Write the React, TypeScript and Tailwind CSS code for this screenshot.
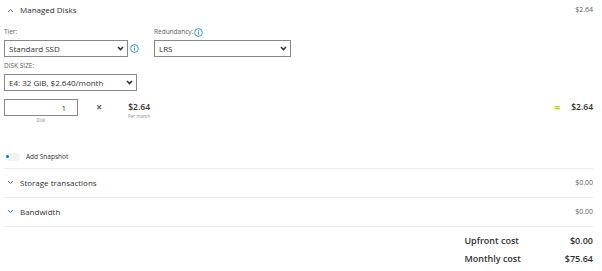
const Chevron = ({ up, className }: { up?: boolean; className?: string }) => (
  <svg width="7" height="5" viewBox="0 0 7 5" className={className}>
    <path
      d={up ? "M1 4 L3.5 1.5 L6 4" : "M1 1 L3.5 3.5 L6 1"}
      fill="none"
      stroke="currentColor"
      strokeWidth="0.9"
    />
  </svg>
);

const SelectCaret = () => (
  <svg width="7" height="5" viewBox="0 0 7 5" className="text-[#333]">
    <path d="M1 1 L3.5 3.5 L6 1" fill="none" stroke="currentColor" strokeWidth="1.6" />
  </svg>
);

const Info = () => (
  <svg width="9" height="9" viewBox="0 0 9 9" className="text-[#0078d4]">
    <circle cx="4.5" cy="4.5" r="3.9" fill="none" stroke="currentColor" strokeWidth="0.8" />
    <rect x="4.1" y="2.1" width="0.8" height="0.8" fill="currentColor" />
    <rect x="4.1" y="3.6" width="0.8" height="3" fill="currentColor" />
  </svg>
);

interface FakeSelectProps {
  value: string;
  width: string;
}

const FakeSelect = ({ value, width }: FakeSelectProps) => (
  <div
    className={`${width} h-[17px] border border-[#8a8886] bg-white flex items-center justify-between pl-[4px] pr-[3px]`}
  >
    <span className="text-[8px] text-[#323130]">{value}</span>
    <SelectCaret />
  </div>
);

const SectionRow = ({
  label,
  amount,
  blue,
}: {
  label: string;
  amount: string;
  blue?: boolean;
}) => (
  <div className="h-[29px] flex items-center justify-between border-b border-[#edebe9] pl-[3px]">
    <div className="flex items-center gap-[6px]">
      <Chevron className={blue ? "text-[#0078d4]" : "text-[#605e5c]"} />
      <span className="text-[8px] text-[#323130]">{label}</span>
    </div>
    <span className="text-[7px] text-[#605e5c]">{amount}</span>
  </div>
);

export default function App() {
  return (
    <div
      className="w-[602px] h-[271px] bg-white pl-[4px] pr-[9px] text-[#323130]"
      style={{ fontFamily: '"Open Sans", "Noto Sans", sans-serif' }}
    >
      <div className="h-[20px] flex items-center justify-between pl-[3px]">
        <div className="flex items-center gap-[6px]">
          <Chevron up className="text-[#605e5c]" />
          <span className="text-[8px]">Managed Disks</span>
        </div>
        <span className="text-[7px] text-[#605e5c]">$2.64</span>
      </div>

      <div className="flex gap-[15px] mt-[7px]">
        <div className="flex flex-col gap-[3px]">
          <span className="text-[6.5px] text-[#605e5c] leading-[10px]">Tier:</span>
          <div className="flex items-center gap-[2px]">
            <FakeSelect value="Standard SSD" width="w-[124px]" />
            <Info />
          </div>
        </div>
        <div className="flex flex-col gap-[3px]">
          <div className="flex items-center gap-[1px] h-[10px]">
            <span className="text-[6.5px] text-[#605e5c]">Redundancy:</span>
            <Info />
          </div>
          <FakeSelect value="LRS" width="w-[137px]" />
        </div>
      </div>

      <div className="flex flex-col gap-[3px] mt-[4px]">
        <span className="text-[6.5px] text-[#605e5c] leading-[10px]">DISK SIZE:</span>
        <FakeSelect value="E4: 32 GiB, $2.640/month" width="w-[133px]" />
      </div>

      <div className="flex items-start mt-[8px]">
        <div className="flex flex-col items-center w-[74px]">
          <div className="w-[74px] h-[17px] border border-[#8a8886] flex items-center justify-end pr-[11px]">
            <span className="text-[8px]">1</span>
          </div>
          <span className="text-[4.5px] text-[#8a8886] mt-[1px]">Disk</span>
        </div>
        <div className="w-[24px] flex justify-end mt-[2px]">
          <span className="text-[10px] font-bold text-[#605e5c] leading-[12px]">×</span>
        </div>
        <div className="flex flex-col items-center ml-[26px] mt-[2px]">
          <span className="text-[8.5px] font-semibold leading-[12px]">$2.64</span>
          <span className="text-[4.5px] text-[#8a8886]">Per month</span>
        </div>
        <div className="flex-1 flex justify-end items-center gap-[11px] mt-[2px]">
          <span className="text-[10px] font-bold text-[#a4c639] leading-[12px]">=</span>
          <span className="text-[8.5px] font-semibold leading-[12px]">$2.64</span>
        </div>
      </div>

      <div className="flex items-center gap-[6px] mt-[28px] pl-[1px] h-[10px]">
        <div className="w-[15px] h-[8px] rounded-full bg-[#f3f2f1] flex items-center pl-[1px]">
          <div className="w-[3px] h-[3px] rounded-full bg-[#0078d4]" />
        </div>
        <span className="text-[6.5px] text-[#323130]">Add Snapshot</span>
      </div>

      <div className="border-b border-[#edebe9] mt-[6px]" />
      <SectionRow label="Storage transactions" amount="$0.00" />
      <SectionRow label="Bandwidth" amount="$0.00" blue />

      <div className="flex justify-end mt-[7px]">
        <div className="grid grid-cols-[auto_auto] gap-x-[44px] gap-y-[4px] text-[9px] font-semibold leading-[14px]">
          <span>Upfront cost</span>
          <span className="text-right">$0.00</span>
          <span>Monthly cost</span>
          <span className="text-right">$75.64</span>
        </div>
      </div>
    </div>
  );
}
